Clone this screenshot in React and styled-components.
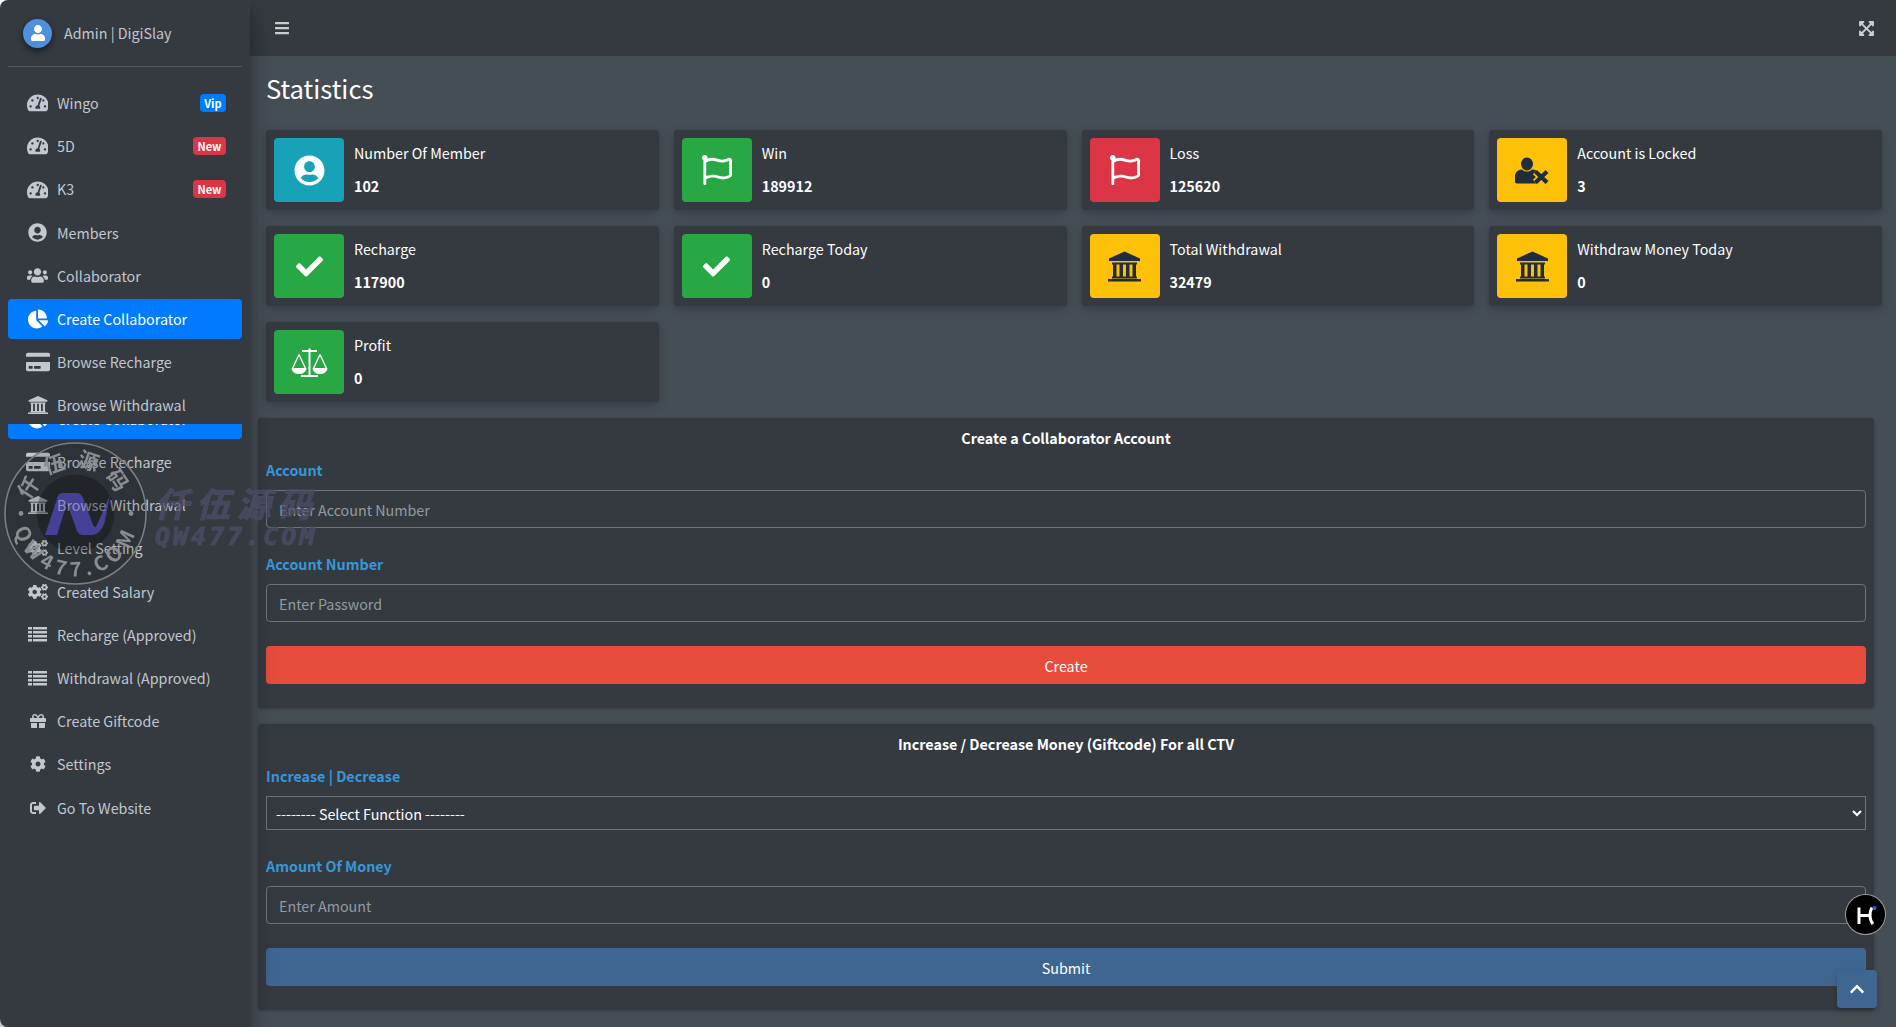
import styled, { createGlobalStyle } from "styled-components";
import {
    FaTachometerAlt,
    FaUserCircle,
    FaUsers,
    FaChartPie,
    FaCreditCard,
    FaCogs,
    FaGift,
    FaCog,
    FaSignOutAlt,
    FaRegFlag,
    FaCheck,
    FaBars,
    FaExpandArrowsAlt,
    FaChevronUp,
    FaUser,
} from "react-icons/fa";

const FONT = `"Noto Sans CJK SC", "Noto Sans", sans-serif`;

// thin four row list, the package's th-list is too heavy here
const ListRows = ({ size }) => (
    <svg viewBox="0 0 19 15" width={size} height={size} fill="currentColor">
        <path d="M0 0h4v2.6H0zM5 0h14v2.6H5zM0 4h4v2.6H0zM5 4h14v2.6H5zM0 8h4v2.6H0zM5 8h14v2.6H5zM0 12h4v2.6H0zM5 12h14v2.6H5z" />
    </svg>
);

const ScaleIcon = ({ size }) => (
    <svg viewBox="0 0 37 30" width={size} height={size} fill="none" stroke="currentColor">
        <path d="M18.5 1v28M11 3.5h15M10 28.5h17" strokeWidth="2" />
        <path d="M8 7L1.5 21M8 7l6.5 14M29 7l-6.5 14M29 7l6.5 14" strokeWidth="1.4" />
        <path d="M.5 20.5h15c-.5 4-3.5 6-7.5 6s-7-2-7.5-6zM21.500 20.500h15c-.5 4-3.500 6-7.500 6s-7-2-7.500-6z" fill="currentColor" strokeWidth="0" />
    </svg>
);

const BankIcon = ({ size }) => (
    <svg viewBox="0 0 33 30" width={size} height={size} fill="currentColor">
        <path d="M16.5 0L32 7v2.500H1V7zM4 11h25v2H4zM5 13h3.500v12H5zM11.500 13H15v12h-3.500zM18 13h3.500v12H18zM24.500 13H28v12h-3.500zM4 25h25v2H4zM0 27.500h33V30H0z" />
    </svg>
);

const UserCrossIcon = ({ size }) => (
    <svg viewBox="0 0 35 26" width={size} height={size}>
        <ellipse cx="12" cy="6.500" rx="6" ry="6.500" fill="currentColor" />
        <path
            d="M0 24v-5c0-4 3-7 7-7 1.500 1.500 3 2 5 2s3.500-.5 5-2c3 0 5 1 6 3v11H2c-1.300 0-2-.7-2-2z"
            fill="currentColor"
        />
        <path d="M20.500 14L32 25M32 14L20.500 25" stroke="#ffc107" strokeWidth="7.500" />
        <path d="M20.500 14L32 25M32 14L20.500 25" stroke="currentColor" strokeWidth="4.200" />
    </svg>
);

const navTop = [
    { label: "Wingo", icon: FaTachometerAlt, size: 21.6, badge: "Vip" },
    { label: "5D", icon: FaTachometerAlt, size: 21.6, badge: "New" },
    { label: "K3", icon: FaTachometerAlt, size: 21.6, badge: "New" },
    { label: "Members", icon: FaUserCircle, size: 19 },
    { label: "Collaborator", icon: FaUsers, size: 21 },
    { label: "Create Collaborator", icon: FaChartPie, size: 20, active: true },
    { label: "Browse Recharge", icon: FaCreditCard, size: 24 },
    { label: "Browse Withdrawal", icon: BankIcon, size: 20 },
];

const navBottom = [
    { label: "Browse Recharge", icon: FaCreditCard, size: 24 },
    { label: "Browse Withdrawal", icon: BankIcon, size: 20 },
    { label: "Level Setting", icon: FaCogs, size: 20 },
    { label: "Created Salary", icon: FaCogs, size: 20 },
    { label: "Recharge (Approved)", icon: ListRows, size: 19 },
    { label: "Withdrawal (Approved)", icon: ListRows, size: 19 },
    { label: "Create Giftcode", icon: FaGift, size: 16 },
    { label: "Settings", icon: FaCog, size: 16 },
    { label: "Go To Website", icon: FaSignOutAlt, size: 16 },
];

const stats = [
    { label: "Number Of Member", value: "102", icon: FaUserCircle, size: 31, color: "#17a2b8" },
    { label: "Win", value: "189912", icon: FaRegFlag, size: 30, color: "#28a745" },
    { label: "Loss", value: "125620", icon: FaRegFlag, size: 30, color: "#dc3545" },
    { label: "Account is Locked", value: "3", icon: UserCrossIcon, size: 35, color: "#ffc107", dark: true },
    { label: "Recharge", value: "117900", icon: FaCheck, size: 27, color: "#28a745" },
    { label: "Recharge Today", value: "0", icon: FaCheck, size: 27, color: "#28a745" },
    { label: "Total Withdrawal", value: "32479", icon: BankIcon, size: 33, color: "#ffc107", dark: true },
    { label: "Withdraw Money Today", value: "0", icon: BankIcon, size: 33, color: "#ffc107", dark: true },
    { label: "Profit", value: "0", icon: ScaleIcon, size: 37, color: "#28a745" },
];

export default function App() {
    return (
        <>
            <GlobalStyle />
            <Layout>
                <Sidebar>
                    <Brand>
                        <Avatar>
                            <FaUser />
                        </Avatar>
                        <span>Admin | DigiSlay</span>
                    </Brand>
                    <Nav>
                        {navTop.map((item) => (
                            <NavRow item={item} key={item.label} />
                        ))}
                        <GhostRow>
                            <NavRow item={navTop[5]} />
                        </GhostRow>
                        {navBottom.map((item) => (
                            <NavRow item={item} key={item.label + "-2"} />
                        ))}
                    </Nav>
                </Sidebar>
                <Main>
                    <TopBar>
                        <FaBars size={16} />
                        <FaExpandArrowsAlt size={17} />
                    </TopBar>
                    <PageTitle>Statistics</PageTitle>
                    <StatGrid>
                        {stats.map((stat) => (
                            <StatCard stat={stat} key={stat.label} />
                        ))}
                    </StatGrid>
                    <FormStack>
                        <FormCard>
                            <CardTitle>Create a Collaborator Account</CardTitle>
                            <Field>
                                <FieldLabel>Account</FieldLabel>
                                <TextInput placeholder="Enter Account Number" />
                            </Field>
                            <Field>
                                <FieldLabel>Account Number</FieldLabel>
                                <TextInput placeholder="Enter Password" />
                            </Field>
                            <ActionButton $color="#e74c3c">Create</ActionButton>
                        </FormCard>
                        <FormCard>
                            <CardTitle>
                                Increase / Decrease Money (Giftcode) For all CTV
                            </CardTitle>
                            <Field>
                                <FieldLabel>Increase | Decrease</FieldLabel>
                                <SelectInput defaultValue="">
                                    <option value="">
                                        -------- Select Function --------
                                    </option>
                                </SelectInput>
                            </Field>
                            <Field>
                                <FieldLabel>Amount Of Money</FieldLabel>
                                <TextInput placeholder="Enter Amount" />
                            </Field>
                            <ActionButton $color="#3f6691">Submit</ActionButton>
                        </FormCard>
                    </FormStack>
                </Main>
            </Layout>
            <Watermark />
            <ChatBadge>
                <svg viewBox="0 0 39 39" width="39" height="39">
                    <path
                        d="M13 12.500V29M13 20.500h11M24 20.500c0-2.500.5-5.500 2-8M24 20.500c0 3 1 6 3 8.500"
                        fill="none"
                        stroke="#fff"
                        strokeWidth="3"
                    />
                    <circle cx="28.500" cy="13" r="2" fill="#2f62e8" />
                </svg>
            </ChatBadge>
            <ScrollTop>
                <FaChevronUp size={16} />
            </ScrollTop>
        </>
    );
}

const NavRow = ({ item }) => {
    const Icon = item.icon;
    return (
        <NavLink $active={item.active}>
            <NavIcon>
                <Icon size={item.size} />
            </NavIcon>
            <span>{item.label}</span>
            {item.badge && <Badge $kind={item.badge}>{item.badge}</Badge>}
        </NavLink>
    );
};

const StatCard = ({ stat }) => {
    const Icon = stat.icon;
    return (
        <InfoBox>
            <InfoIcon $color={stat.color} $dark={stat.dark}>
                <Icon size={stat.size} />
            </InfoIcon>
            <InfoContent>
                <span>{stat.label}</span>
                <strong>{stat.value}</strong>
            </InfoContent>
        </InfoBox>
    );
};

const Watermark = () => (
    <>
        <WatermarkLayer>
            <svg viewBox="0 0 330 150" width="330" height="150">
                <defs>
                    <path id="wm-top" d="M26.5 72.5 A46 46 0 0 1 118.5 72.5" />
                    <path id="wm-bottom" d="M9.5 72.5 A63 63 0 0 0 135.5 72.5" />
                </defs>
                <circle cx="72.5" cy="72.5" r="72" fill="rgba(0,0,0,0.12)" />
                <circle cx="72.5" cy="72.5" r="70.5" fill="none" stroke="#7b7e82" strokeWidth="1.6" />
                <circle cx="72.5" cy="72.5" r="39" fill="rgba(0,0,0,0.28)" />
                <WatermarkRing fontSize="21">
                    <textPath href="#wm-top" startOffset="50%" textAnchor="middle" letterSpacing="9">
                        仟伍源码
                    </textPath>
                </WatermarkRing>
                <WatermarkRing fontSize="20">
                    <textPath href="#wm-bottom" startOffset="50%" textAnchor="middle" letterSpacing="5">
                        QW477.COM
                    </textPath>
                </WatermarkRing>
                <circle cx="18" cy="72.5" r="2.4" fill="#8a8d91" />
                <circle cx="128" cy="72.5" r="2.4" fill="#8a8d91" />
                <WatermarkTitle x="152" y="76" fontSize="34" letterSpacing="7">
                    仟伍源码
                </WatermarkTitle>
                <WatermarkTitle x="152" y="104" fontSize="25" letterSpacing="3" $latin>
                    QW477.COM
                </WatermarkTitle>
            </svg>
        </WatermarkLayer>
        <WatermarkLogo>
            <svg viewBox="0 0 145 150" width="145" height="150">
                <path
                    d="M42 94 L55 55 Q56 52 60 52 L74 52 Q78 52 80 57 L90 84 Q92 88 94 84 L107 54 L102 80 Q98 94 88 94 L80 94 Q76 94 74 90 L64 62 L54 94 Z"
                    fill="#2a2282"
                />
            </svg>
        </WatermarkLogo>
    </>
);

const GlobalStyle = createGlobalStyle`
    * {
        box-sizing: border-box;
    }

    html, body {
        margin: 0;
        height: 100%;
        background: #fff;
        overflow: hidden;
    }

    body {
        font-family: ${FONT};
        font-size: 14.3px;
        line-height: 24px;
        color: #fff;
    }
`;

const Layout = styled.div`
    display: flex;
    height: 1027px;
    background: #fff;
`;

const Sidebar = styled.aside`
    width: 250px;
    flex: none;
    z-index: 2;
    padding: 0 8px;
    background: #343a40;
    border-radius: 8px 0 0 8px;
    box-shadow: 0 14px 28px rgba(0, 0, 0, 0.25), 0 10px 10px rgba(0, 0, 0, 0.22);
    color: #c2c7d0;
`;

const Brand = styled.div`
    display: flex;
    align-items: center;
    gap: 12px;
    height: 67px;
    padding-left: 15px;
    border-bottom: 1px solid #4f5962;
`;

const Avatar = styled.div`
    width: 29px;
    height: 29px;
    border-radius: 50%;
    display: flex;
    align-items: center;
    justify-content: center;
    background: #4f8fdc;
    color: #fff;
    font-size: 16px;
    box-shadow: 0 3px 6px rgba(0, 0, 0, 0.3), 0 3px 6px rgba(0, 0, 0, 0.25);
`;

const Nav = styled.nav`
    display: flex;
    flex-direction: column;
    gap: 3.2px;
    padding-top: 16px;
`;

const NavLink = styled.div`
    display: flex;
    align-items: center;
    flex: none;
    height: 40px;
    padding: 0 16px;
    border-radius: 4px;
    white-space: nowrap;
    background: ${(p) => (p.$active ? "#007bff" : "transparent")};
    color: ${(p) => (p.$active ? "#fff" : "#c2c7d0")};
`;

const NavIcon = styled.span`
    width: 25.6px;
    margin: 0 6.6px 0 0.8px;
    display: flex;
    justify-content: center;
    flex: none;
`;

const Badge = styled.span`
    margin-left: auto;
    padding: 0 4.5px;
    height: 18px;
    border-radius: 4px;
    font-size: 11px;
    font-weight: 700;
    line-height: 18px;
    color: #fff;
    background: ${(p) => (p.$kind === "Vip" ? "#007bff" : "#dc3545")};
`;

const GhostRow = styled.div`
    height: 15px;
    margin-top: -4.6px;
    overflow: hidden;
    flex: none;

    ${NavLink} {
        margin-top: -25px;
    }
`;

const Main = styled.main`
    flex: 1;
    min-width: 0;
    background: #454d55;
`;

const TopBar = styled.header`
    height: 56px;
    display: flex;
    align-items: center;
    justify-content: space-between;
    padding: 0 21px 0 24px;
    background: #343a40;
    color: rgba(255, 255, 255, 0.75);
`;

const PageTitle = styled.h1`
    margin: 0;
    padding: 15px 0 24.5px 16px;
    font-size: 25.6px;
    font-weight: 400;
    line-height: 34.5px;
    color: #fff;
`;

const StatGrid = styled.section`
    display: grid;
    grid-template-columns: repeat(4, 1fr);
    gap: 16px 15px;
    margin: 0 14px 16px 16px;
`;

const InfoBox = styled.div`
    display: flex;
    height: 80px;
    padding: 8px;
    background: #343a40;
    border-radius: 4px;
    box-shadow: 0 0 1px rgba(0, 0, 0, 0.125), 0 3px 10px rgba(0, 0, 0, 0.2);
`;

const InfoIcon = styled.div`
    width: 70px;
    flex: none;
    display: flex;
    align-items: center;
    justify-content: center;
    border-radius: 4px;
    background: ${(p) => p.$color};
    color: ${(p) => (p.$dark ? "#1f2d3d" : "#fff")};
`;

const InfoContent = styled.div`
    display: flex;
    flex-direction: column;
    justify-content: center;
    gap: 4px;
    padding: 0 10px;
    line-height: 28.8px;

    strong {
        font-weight: 700;
    }
`;

const FormStack = styled.section`
    display: flex;
    flex-direction: column;
    gap: 16px;
    margin: 0 22px 0 8px;
`;

const FormCard = styled.div`
    display: flex;
    flex-direction: column;
    gap: 24px;
    padding: 8px 8px 24px;
    background: #343a40;
    border-radius: 4px;
    box-shadow: 0 0 1px rgba(0, 0, 0, 0.125), 0 1px 3px rgba(0, 0, 0, 0.2);
`;

const CardTitle = styled.h3`
    margin: 0 0 -16px;
    font-size: 14.3px;
    font-weight: 700;
    line-height: 24px;
    text-align: center;
    color: #fff;
`;

const Field = styled.div`
    display: flex;
    flex-direction: column;
    gap: 8px;
`;

const FieldLabel = styled.label`
    font-weight: 700;
    line-height: 24px;
    color: #3498db;
`;

const TextInput = styled.input`
    height: 38px;
    padding: 0 12px;
    border: 1px solid #6c757d;
    border-radius: 4px;
    outline: none;
    background: #343a40;
    color: #fff;
    font-family: ${FONT};
    font-size: 14.3px;

    &::placeholder {
        color: #939ba2;
        opacity: 1;
    }
`;

const SelectInput = styled.select`
    height: 34px;
    padding: 0 5px;
    border: 1px solid #6c757d;
    border-radius: 0;
    outline: none;
    background: #343a40;
    color: #fff;
    color-scheme: dark;
    font-family: ${FONT};
    font-size: 14.3px;
`;

const ActionButton = styled.button`
    height: 38px;
    border: none;
    border-radius: 4px;
    background: ${(p) => p.$color};
    color: #fff;
    font-family: ${FONT};
    font-size: 14.3px;
`;

const WatermarkLayer = styled.div`
    position: fixed;
    left: 3px;
    top: 441px;
    z-index: 5;
    pointer-events: none;
    line-height: 0;
`;

const WatermarkLogo = styled(WatermarkLayer)`
    z-index: 6;
    mix-blend-mode: screen;
`;

const WatermarkRing = styled.text`
    font-family: ${FONT};
    font-weight: 700;
    fill: #8a8d91;
`;

const WatermarkTitle = styled.text`
    font-family: ${(p) => (p.$latin ? `"DejaVu Sans Mono", monospace` : FONT)};
    font-weight: 700;
    font-style: italic;
    fill: rgba(78, 78, 104, 0.72);
    stroke: rgba(78, 78, 104, 0.72);
    stroke-width: 1px;
`;

const ChatBadge = styled.div`
    position: fixed;
    left: 1846px;
    top: 895px;
    z-index: 7;
    width: 39px;
    height: 39px;
    border-radius: 50%;
    background: #000;
    box-shadow: 0 0 0 1px #a0a0a0;
    line-height: 0;
`;

const ScrollTop = styled.div`
    position: fixed;
    right: 19px;
    bottom: 19px;
    z-index: 7;
    width: 40px;
    height: 38px;
    display: flex;
    align-items: center;
    justify-content: center;
    border-radius: 4px;
    background: #3f6691;
    color: #fff;
    box-shadow: 0 3px 6px rgba(0, 0, 0, 0.2);
`;
